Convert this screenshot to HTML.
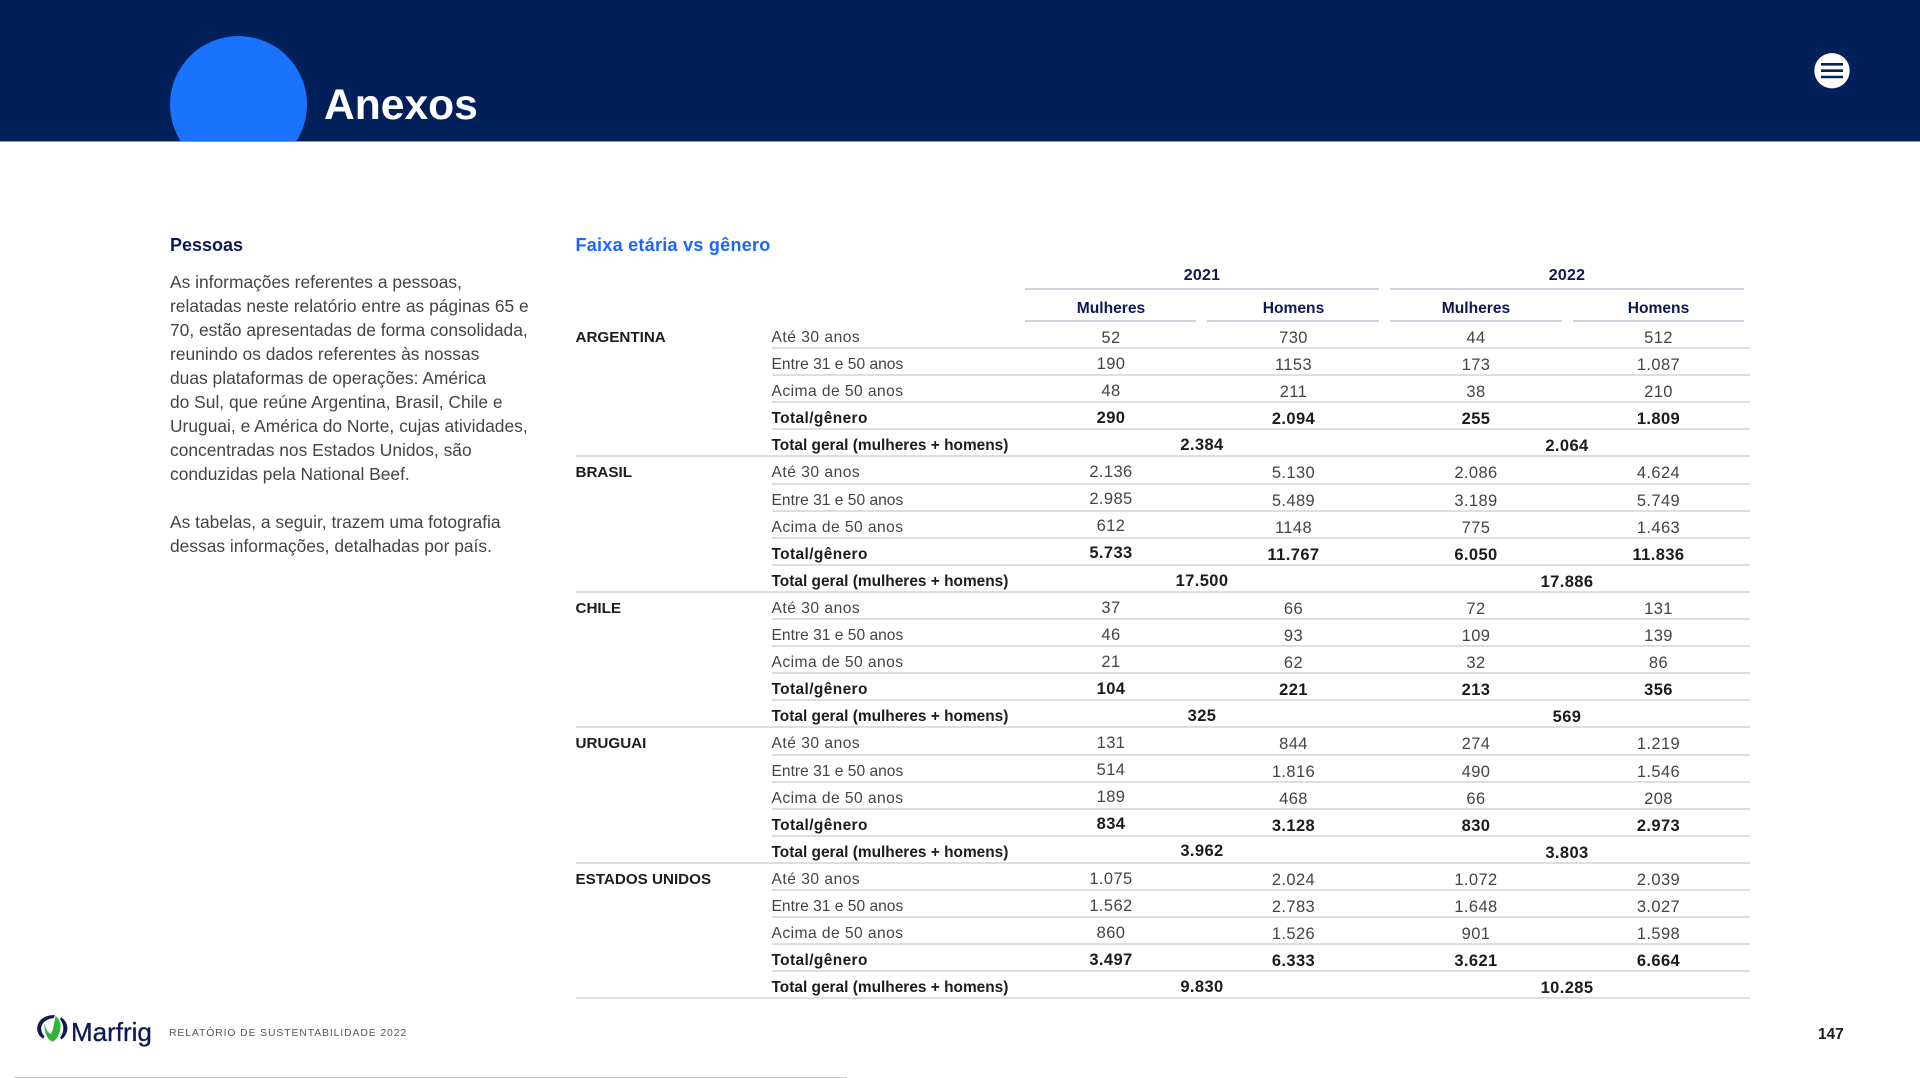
<!DOCTYPE html>
<html lang="pt"><head><meta charset="utf-8"><title>Anexos</title>
<style>
html,body{margin:0;padding:0;background:#fff}
body{width:1920px;height:1078px;position:relative;overflow:hidden;font-family:"Liberation Sans",sans-serif;color:#444}
.abs{position:absolute;white-space:nowrap}
#hd{position:absolute;left:0;top:0;width:1920px;height:142px;background:#012059;overflow:hidden;border-bottom:1px solid #8f93b0;box-sizing:border-box}
#circ{position:absolute;left:170px;top:36px;width:137px;height:137px;border-radius:50%;background:#1a73ff}
#title{left:324px;top:81px;font-size:42.6px;line-height:48px;font-weight:bold;color:#fff}
#bg{left:170px;top:234px;font-size:18px;line-height:22px;font-weight:bold;color:#0d1854}
#ft{left:575.5px;top:234px;font-size:18px;line-height:22px;font-weight:bold;color:#1a66ff;letter-spacing:.27px}
#txt{left:170px;top:269.500px;font-size:17.4px;line-height:24px;color:#444}
#rows{position:absolute;left:0;top:321px;width:1920px}
.r{position:relative;height:27.1px;line-height:34px;font-size:15.5px}
.r::after{content:"";position:absolute;left:771.5px;right:170px;bottom:-1px;height:2px;background:#dcdee3}
.r.e::after{left:575.5px}
.r b.k{position:absolute;left:575.5px;top:0;font-size:15.2px;color:#1c1c1c}
.r span{position:absolute;top:0;width:200px;text-align:center;font-size:16.5px;letter-spacing:.4px}
.r span:nth-of-type(1){left:771.5px;width:auto;text-align:left;font-size:15.6px;letter-spacing:0}
.r.a span:nth-of-type(1){letter-spacing:.45px}
.r.b span:nth-of-type(1){letter-spacing:.5px}
.r span:nth-of-type(2){left:1011px;margin-top:-1.3px}
.r span:nth-of-type(3){left:1193.5px}
.r span:nth-of-type(4){left:1376px}
.r span:nth-of-type(5){left:1558.5px}
.t span,.g span{font-weight:bold;color:#1c1c1c}
.t span:nth-of-type(1),.g span:nth-of-type(1){font-size:15.45px}
.t span:nth-of-type(1){letter-spacing:.4px}
.g span:nth-of-type(2){left:1102px}
.g span:nth-of-type(3){left:1467px}
.f span:nth-of-type(2){margin-top:0}
.hl{position:absolute;height:2px;background:#cfd2dc}
.yh{position:absolute;width:200px;text-align:center;font-weight:bold;color:#0d1854;line-height:20px}
.y{top:265.500px;font-size:16px;letter-spacing:.2px}
.s{top:299px;font-size:15.6px}
#foot{left:169px;top:1027px;font-size:10.4px;line-height:14px;letter-spacing:.9px;color:#555}
#pg{left:1818px;top:1025.500px;font-size:15.4px;line-height:18px;font-weight:bold;color:#1c1c1c}
#mf{left:71px;top:1015px;font-size:26px;line-height:34px;color:#0d1854;-webkit-text-stroke:.3px #0d1854}
#bl{position:absolute;left:14px;top:1077px;width:833px;height:1px;background:#cfcfcf}
svg{position:absolute}
</style></head><body>
<div id="hd"><div id="circ"></div></div>
<div id="title" class="abs">Anexos</div>
<svg style="left:1810px;top:52px" width="44" height="38" viewBox="0 0 44 38"><circle cx="22" cy="18.7" r="17.7" fill="#fff"/><path d="M11 12.3H33M11 18.7H33M11 25H33" stroke="#012059" stroke-width="2.6" fill="none"/></svg>
<div id="bg" class="abs">Pessoas</div>
<div id="txt" class="abs">As informações referentes a pessoas,<br>relatadas neste relatório entre as páginas 65 e<br>70, estão apresentadas de forma consolidada,<br>reunindo os dados referentes às nossas<br>duas plataformas de operações: América<br>do Sul, que reúne Argentina, Brasil, Chile e<br>Uruguai, e América do Norte, cujas atividades,<br>concentradas nos Estados Unidos, são<br>conduzidas pela National Beef.<br><br>As tabelas, a seguir, trazem uma fotografia<br>dessas informações, detalhadas por país.</div>
<div id="ft" class="abs">Faixa etária vs gênero</div>
<div class="yh y" style="left:1102px">2021</div><div class="yh y" style="left:1467px">2022</div>
<div class="hl" style="left:1025px;top:288px;width:354px"></div><div class="hl" style="left:1390px;top:288px;width:354px"></div>
<div class="yh s" style="left:1011px">Mulheres</div><div class="yh s" style="left:1193.5px">Homens</div><div class="yh s" style="left:1376px">Mulheres</div><div class="yh s" style="left:1558.5px">Homens</div>
<div class="hl" style="left:1025px;top:320px;width:171px"></div><div class="hl" style="left:1207px;top:320px;width:172px"></div><div class="hl" style="left:1390px;top:320px;width:172px"></div><div class="hl" style="left:1573px;top:320px;width:171px"></div>
<div id="rows">
<div class="r f b"><b class="k">ARGENTINA</b><span>Até 30 anos</span><span>52</span><span>730</span><span>44</span><span>512</span></div>
<div class="r"><span>Entre 31 e 50 anos</span><span>190</span><span>1153</span><span>173</span><span>1.087</span></div>
<div class="r a"><span>Acima de 50 anos</span><span>48</span><span>211</span><span>38</span><span>210</span></div>
<div class="r t"><span>Total/gênero</span><span>290</span><span>2.094</span><span>255</span><span>1.809</span></div>
<div class="r g e"><span>Total geral (mulheres + homens)</span><span>2.384</span><span>2.064</span></div>
<div class="r b"><b class="k">BRASIL</b><span>Até 30 anos</span><span>2.136</span><span>5.130</span><span>2.086</span><span>4.624</span></div>
<div class="r"><span>Entre 31 e 50 anos</span><span>2.985</span><span>5.489</span><span>3.189</span><span>5.749</span></div>
<div class="r a"><span>Acima de 50 anos</span><span>612</span><span>1148</span><span>775</span><span>1.463</span></div>
<div class="r t"><span>Total/gênero</span><span>5.733</span><span>11.767</span><span>6.050</span><span>11.836</span></div>
<div class="r g e"><span>Total geral (mulheres + homens)</span><span>17.500</span><span>17.886</span></div>
<div class="r b"><b class="k">CHILE</b><span>Até 30 anos</span><span>37</span><span>66</span><span>72</span><span>131</span></div>
<div class="r"><span>Entre 31 e 50 anos</span><span>46</span><span>93</span><span>109</span><span>139</span></div>
<div class="r a"><span>Acima de 50 anos</span><span>21</span><span>62</span><span>32</span><span>86</span></div>
<div class="r t"><span>Total/gênero</span><span>104</span><span>221</span><span>213</span><span>356</span></div>
<div class="r g e"><span>Total geral (mulheres + homens)</span><span>325</span><span>569</span></div>
<div class="r b"><b class="k">URUGUAI</b><span>Até 30 anos</span><span>131</span><span>844</span><span>274</span><span>1.219</span></div>
<div class="r"><span>Entre 31 e 50 anos</span><span>514</span><span>1.816</span><span>490</span><span>1.546</span></div>
<div class="r a"><span>Acima de 50 anos</span><span>189</span><span>468</span><span>66</span><span>208</span></div>
<div class="r t"><span>Total/gênero</span><span>834</span><span>3.128</span><span>830</span><span>2.973</span></div>
<div class="r g e"><span>Total geral (mulheres + homens)</span><span>3.962</span><span>3.803</span></div>
<div class="r b"><b class="k">ESTADOS UNIDOS</b><span>Até 30 anos</span><span>1.075</span><span>2.024</span><span>1.072</span><span>2.039</span></div>
<div class="r"><span>Entre 31 e 50 anos</span><span>1.562</span><span>2.783</span><span>1.648</span><span>3.027</span></div>
<div class="r a"><span>Acima de 50 anos</span><span>860</span><span>1.526</span><span>901</span><span>1.598</span></div>
<div class="r t"><span>Total/gênero</span><span>3.497</span><span>6.333</span><span>3.621</span><span>6.664</span></div>
<div class="r g e"><span>Total geral (mulheres + homens)</span><span>9.830</span><span>10.285</span></div>
</div>
<svg style="left:36px;top:1014px" width="32" height="30" viewBox="0 0 32 30"><path d="M19 1.200C8 .5 1.200 7 1.200 14.500c0 4 2 7.800 6 10.300l1.300-2.300C6.500 20 5.200 17.500 5.200 14.500 5.200 9 11 4.500 17.500 4.300z" fill="#0d1854"/><path d="M25 3.200c4 2.500 6.400 6.500 6.400 11 0 4.500-2.200 8.500-5.900 11.200l-1.500-2c2.300-2.500 3.300-5.800 3.300-9.200 0-3.200-1-6-3.300-8.800z" fill="#0d1854"/><path d="M8.700 9.500C9.500 15.500 12 18.500 15 20 17 17 18 10 19.500 2c3 2 5.500 7 5 11-.5 7-4 13.500-8 14.500C12 26.500 7.500 18 8.700 9.500z" fill="#2fb53a"/></svg>
<div id="mf" class="abs">Marfrig</div>
<div id="foot" class="abs">RELATÓRIO DE SUSTENTABILIDADE 2022</div>
<div id="pg" class="abs">147</div>
<div id="bl"></div>
</body></html>
